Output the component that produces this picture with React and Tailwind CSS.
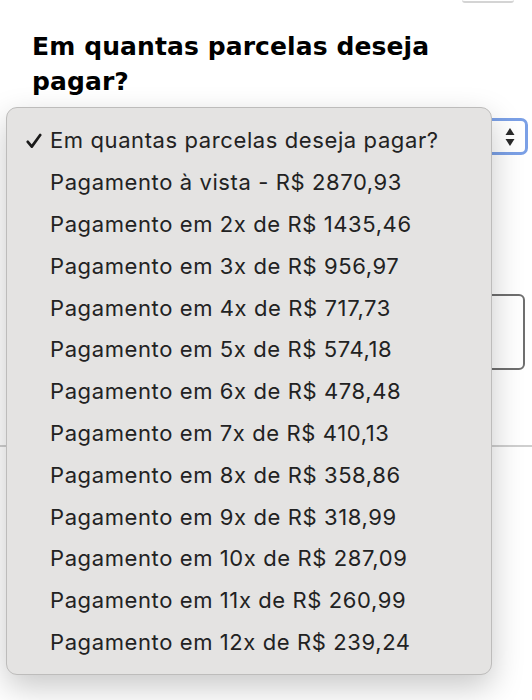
import React from 'react'

const options = [
  'Pagamento à vista - R$ 2870,93',
  'Pagamento em 2x de R$ 1435,46',
  'Pagamento em 3x de R$ 956,97',
  'Pagamento em 4x de R$ 717,73',
  'Pagamento em 5x de R$ 574,18',
  'Pagamento em 6x de R$ 478,48',
  'Pagamento em 7x de R$ 410,13',
  'Pagamento em 8x de R$ 358,86',
  'Pagamento em 9x de R$ 318,99',
  'Pagamento em 10x de R$ 287,09',
  'Pagamento em 11x de R$ 260,99',
  'Pagamento em 12x de R$ 239,24',
]

function SelectArrows() {
  return (
    <svg width="10" height="22" viewBox="0 0 10 22" className="text-[#2b2b2b]">
      <path d="M5 2 L9.5 9 L0.5 9 Z" fill="currentColor" />
      <path d="M5 20 L9.5 13 L0.5 13 Z" fill="currentColor" />
    </svg>
  )
}

function Check() {
  return (
    <svg width="16" height="16" viewBox="0 0 16 16" className="text-[#1a1a1a]">
      <path
        d="M1.8 8.8 L5.8 13.6 L14.2 2"
        fill="none"
        stroke="currentColor"
        strokeWidth="2.7"
        strokeLinecap="round"
        strokeLinejoin="round"
      />
    </svg>
  )
}

function Menu() {
  return (
    <div className="absolute left-[6px] top-[107px] w-[486px] rounded-[11px] border border-[#bdbcbb] bg-[#e4e3e2] pt-[12px] pb-[11px] shadow-[0_12px_32px_rgba(0,0,0,0.22)] font-['Inter','Liberation_Sans',sans-serif] text-[22px] tracking-[0.6px] text-[#222]">
      <div className="flex h-[41.8px] items-center">
        <span className="flex w-[43px] justify-end pr-[8px]">
          <Check />
        </span>
        <span>Em quantas parcelas deseja pagar?</span>
      </div>
      {options.map((o) => (
        <div key={o} className="flex h-[41.8px] items-center pl-[43px]">
          {o}
        </div>
      ))}
    </div>
  )
}

export default function App() {
  return (
    <div className="relative h-[700px] w-[532px] overflow-hidden bg-white">
      <div className="flex justify-end pr-[18px]">
        <div className="h-[3px] w-[52px] rounded-b-[6px] border-b-2 border-[#d4d4d4]" />
      </div>

      <div className="pl-8 pt-[26px]">
        <h2 className="max-w-[440px] font-['DejaVu_Sans',sans-serif] text-[25px] font-bold leading-[35px] tracking-[0.1px] text-black">
          Em quantas parcelas deseja pagar?
        </h2>

        <div className="mt-[19px] mr-[4px] flex h-[37px] items-center justify-end rounded-[7px] border-[3px] border-[#7ba0e6] bg-white pr-[10px]">
          <SelectArrows />
        </div>

        <div className="mt-[139px] mr-[7px] h-[76px] rounded-[6px] border-2 border-[#6f6f6f]" />
      </div>

      <div className="mt-[75px] h-[2px] bg-[#cfcfcf]" />

      <Menu />
    </div>
  )
}
